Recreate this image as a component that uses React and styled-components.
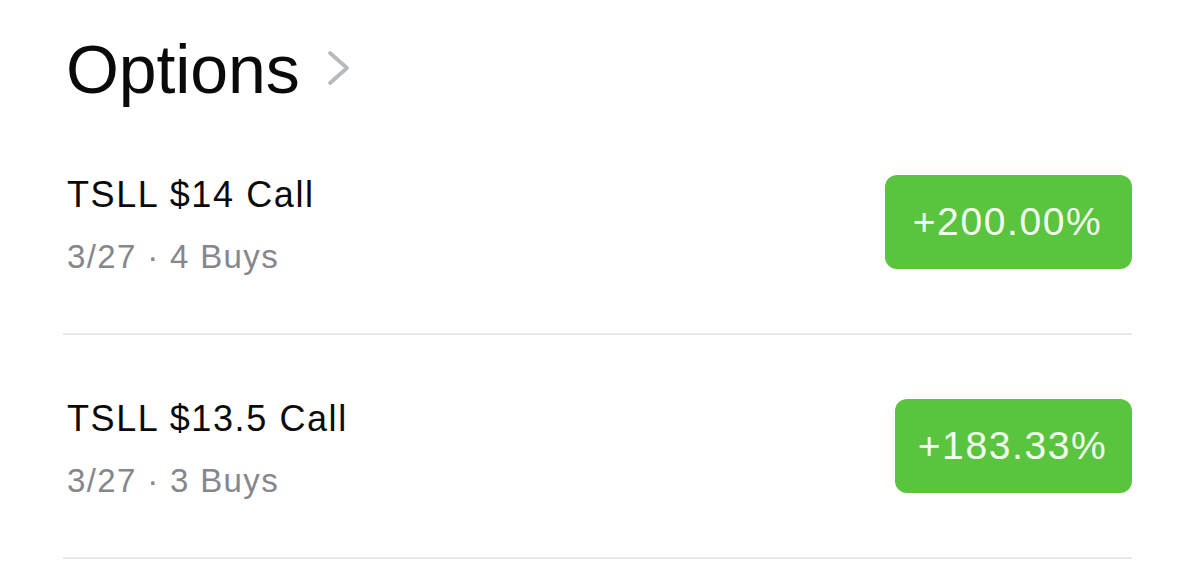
import React from "react";
import styled, { createGlobalStyle } from "styled-components";

const Global = createGlobalStyle`
  html, body { margin: 0; padding: 0; background: #ffffff; }
  body { font-family: "Liberation Sans", Arial, sans-serif; -webkit-font-smoothing: antialiased; }
`;

const Page = styled.div`
  width: 1199px;
  box-sizing: border-box;
  padding: 35px 67px 0 63px;
`;

const Header = styled.div`
  display: flex;
  align-items: center;
  height: 68px;
  padding-left: 3px;
  margin-bottom: 8px;
`;

const Title = styled.h1`
  margin: 0;
  font-size: 68px;
  line-height: 68px;
  font-weight: 400;
  color: #0a0a0a;
  letter-spacing: -0.1px;
`;

const Chevron = styled.svg`
  margin-left: 27px;
  margin-top: -3px;
  flex: none;
`;

const List = styled.div`
  display: flex;
  flex-direction: column;
`;

const Row = styled.div`
  display: flex;
  align-items: center;
  justify-content: space-between;
  padding: 64px 0 64px 4px;
  border-bottom: 2px solid #e9e9eb;
`;

const Info = styled.div`
  display: flex;
  flex-direction: column;
`;

const Name = styled.div`
  font-size: 36px;
  line-height: 39px;
  color: #0a0a0a;
  letter-spacing: 1.6px;
`;

const Meta = styled.div`
  margin-top: 31px;
  font-size: 33px;
  line-height: 24px;
  color: #84878b;
  letter-spacing: 1.35px;
`;

const Badge = styled.div`
  display: flex;
  align-items: center;
  justify-content: center;
  height: 94px;
  width: ${(p) => p.$width}px;
  padding-right: 2px;
  box-sizing: border-box;
  border-radius: 12px;
  background: #5bc43f;
  color: #f3fff0;
  font-size: 39px;
  letter-spacing: 1.6px;
  white-space: nowrap;
`;

const options = [
  { name: "TSLL $14 Call", date: "3/27", buys: "4 Buys", change: "+200.00%", w: 247 },
  { name: "TSLL $13.5 Call", date: "3/27", buys: "3 Buys", change: "+183.33%", w: 237 },
];

export default function App() {
  return (
    <>
      <Global />
      <Page>
        <Header>
          <Title>Options</Title>
          <Chevron width="23" height="36" viewBox="0 0 23 36">
            <polyline
              points="3,3 20,18 3,33"
              fill="none"
              stroke="#b7babd"
              strokeWidth="3.8"
              strokeLinecap="round"
              strokeLinejoin="round"
            />
          </Chevron>
        </Header>
        <List>
          {options.map((o) => (
            <Row key={o.name}>
              <Info>
                <Name>{o.name}</Name>
                <Meta>
                  {o.date} · {o.buys}
                </Meta>
              </Info>
              <Badge $width={o.w}>{o.change}</Badge>
            </Row>
          ))}
        </List>
      </Page>
    </>
  );
}
